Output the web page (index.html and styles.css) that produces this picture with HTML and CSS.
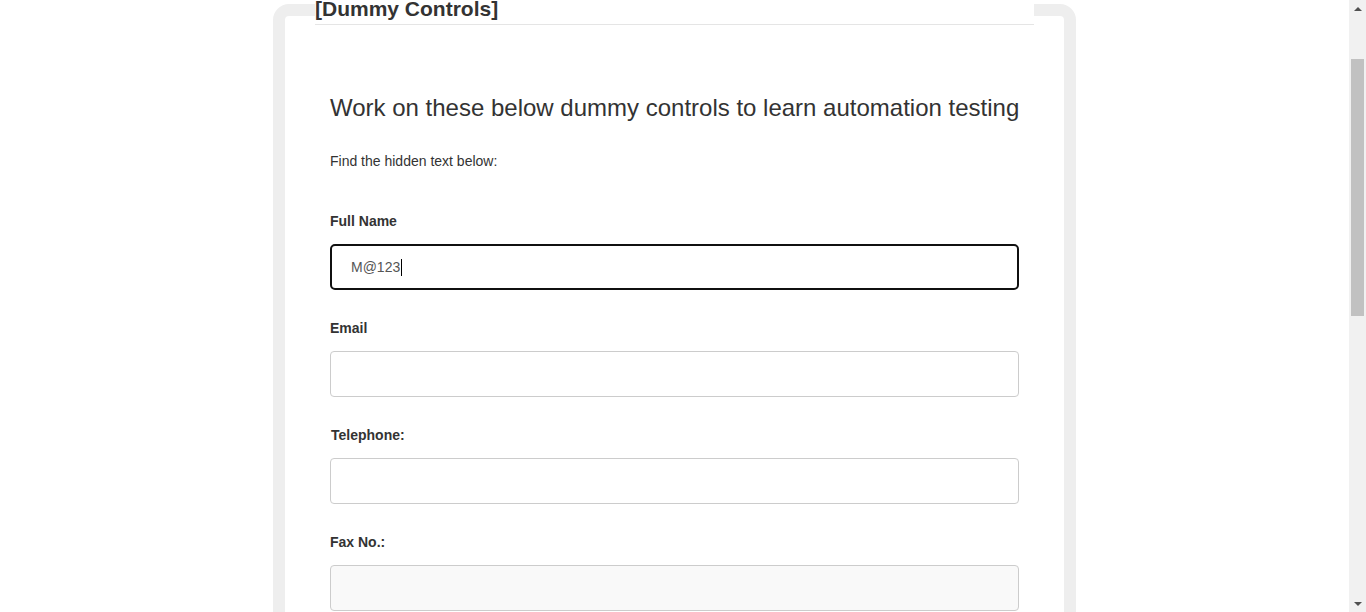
FILE: index.html
```html
<!DOCTYPE html>
<html lang="en">
<head>
<meta charset="utf-8">
<title>Dummy Controls</title>
<link rel="stylesheet" href="styles.css">
</head>
<body>
<div class="window">
  <main class="viewport">
    <fieldset class="frame">
      <legend class="frame-legend">[Dummy Controls]</legend>
      <div class="content">
        <h3 class="title">Work on these below dummy controls to learn automation testing</h3>
        <p class="hint">Find the hidden text below:</p>
        <div class="form-group">
          <label class="field-label">Full Name</label>
          <div class="form-control focused"><span class="value">M@123</span><span class="caret"></span></div>
        </div>
        <div class="form-group">
          <label class="field-label">Email</label>
          <input class="form-control" type="text">
        </div>
        <div class="form-group">
          <label class="field-label tel">Telephone:</label>
          <input class="form-control" type="text">
        </div>
        <div class="form-group">
          <label class="field-label">Fax No.:</label>
          <input class="form-control readonly" type="text" readonly>
        </div>
      </div>
    </fieldset>
  </main>
  <div class="scrollbar">
    <div class="sb-btn"><span class="arrow-up"></span></div>
    <div class="sb-track">
      <div class="sb-thumb"></div>
    </div>
    <div class="sb-btn"><span class="arrow-down"></span></div>
  </div>
</div>
</body>
</html>
```
FILE: styles.css
```css
* { box-sizing: border-box; }
html, body {
  margin: 0;
  padding: 0;
  height: 612px;
  overflow: hidden;
  background: #fff;
  font-family: "Liberation Sans", Arial, sans-serif;
  color: #333;
}
.window {
  display: flex;
  height: 612px;
}
.viewport {
  flex: 1;
  height: 612px;
  overflow: hidden;
}
.frame {
  width: 803px;
  margin: -6px auto 0;
  border: 12px solid #eeeeee;
  border-radius: 16px;
  padding: 0 30px 60px;
  min-width: 0;
}
.frame-legend {
  width: 100%;
  padding: 0;
  margin: 0;
  font-size: 21px;
  font-weight: bold;
  line-height: 30px;
  color: #333;
  border-bottom: 1px solid #e5e5e5;
}
.content {
  padding: 70px 15px 0;
}
.title {
  margin: 0;
  font-size: 24px;
  font-weight: 500;
  line-height: 26.4px;
  color: #333;
  white-space: nowrap;
}
.hint {
  margin: 30px 0 0;
  font-size: 14px;
  line-height: 20px;
}
.form-group {
  margin-top: 40px;
}
.form-group + .form-group {
  margin-top: 28px;
}
.field-label {
  display: block;
  font-size: 14px;
  font-weight: bold;
  line-height: 20px;
  margin-bottom: 13px;
}
.field-label.tel { padding-left: 1px; }
.form-control {
  display: flex;
  align-items: center;
  width: 100%;
  height: 46px;
  border: 1px solid #cccccc;
  border-radius: 4px;
  padding: 0 20px;
  background: #fff;
  font-family: "Liberation Sans", Arial, sans-serif;
  font-size: 14px;
  color: #555;
  outline: none;
}
.form-control.focused {
  border: 2px solid #101010;
  border-radius: 5px;
  padding: 0 19px;
}
.form-control.readonly {
  background: #f9f9f9;
}
.caret {
  display: inline-block;
  width: 1px;
  height: 17px;
  background: #000;
  margin-left: 1px;
}
.scrollbar {
  width: 17px;
  flex: none;
  height: 612px;
  background: #f1f1f1;
  display: flex;
  flex-direction: column;
}
.sb-btn {
  height: 17px;
  flex: none;
  display: flex;
  align-items: center;
  justify-content: center;
}
.arrow-up {
  width: 0; height: 0;
  border-left: 4px solid transparent;
  border-right: 4px solid transparent;
  border-bottom: 4px solid #505050;
}
.arrow-down {
  width: 0; height: 0;
  border-left: 4px solid transparent;
  border-right: 4px solid transparent;
  border-top: 4px solid #505050;
}
.sb-track {
  flex: 1;
  padding: 42px 2px 0;
}
.sb-thumb {
  height: 257px;
  background: #c1c1c1;
}
```
